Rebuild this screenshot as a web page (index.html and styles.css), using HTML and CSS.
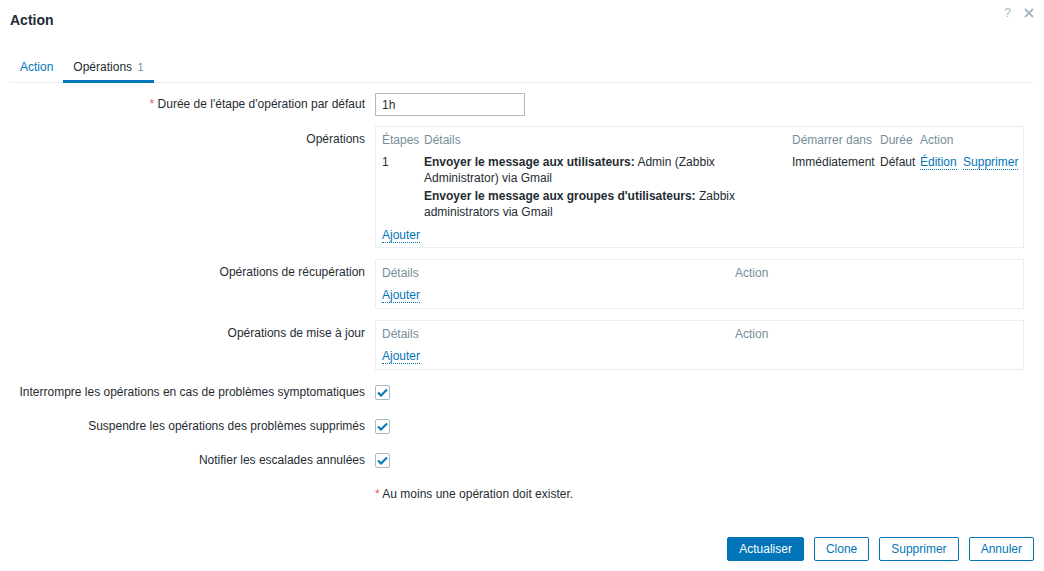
FILE: index.html
```html
<!DOCTYPE html>
<html lang="fr">
<head>
  <meta charset="UTF-8">
  <title>Action</title>
  <link rel="stylesheet" href="styles.css">
</head>
<body>
  <div class="dialog">
    <div class="dialog-head">
      <h4>Action</h4>
      <div class="head-btns">
        <span class="help">?</span>
        <svg class="close" width="10" height="10" viewBox="0 0 10 10"><path d="M1 1L9 9M9 1L1 9" stroke="#a3b6c2" stroke-width="1.8"/></svg>
      </div>
    </div>

    <ul class="tabs">
      <li><a>Action</a></li>
      <li class="active"><a>Opérations <span class="count">1</span></a></li>
    </ul>

    <div class="form">
      <div class="form-row row-input">
        <label class="lbl"><span class="req">*</span> Durée de l'étape d'opération par défaut</label>
        <div class="field"><input type="text" class="txt" value="1h"></div>
      </div>

      <div class="form-row">
        <label class="lbl lbl-box">Opérations</label>
        <div class="field">
          <div class="op-box">
            <div class="op-grid op-main">
              <div class="th">Étapes</div>
              <div class="th">Détails</div>
              <div class="th">Démarrer dans</div>
              <div class="th">Durée</div>
              <div class="th">Action</div>

              <div class="td">1</div>
              <div class="td details">
                <div><b>Envoyer le message aux utilisateurs:</b> Admin (Zabbix Administrator) via Gmail</div>
                <div><b>Envoyer le message aux groupes d'utilisateurs:</b> Zabbix administrators via Gmail</div>
              </div>
              <div class="td">Immédiatement</div>
              <div class="td">Défaut</div>
              <div class="td links"><a class="link">Édition</a> <a class="link">Supprimer</a></div>
            </div>
            <div class="add add-main"><a class="link">Ajouter</a></div>
          </div>
        </div>
      </div>

      <div class="form-row">
        <label class="lbl lbl-box">Opérations de récupération</label>
        <div class="field">
          <div class="op-box">
            <div class="op-grid op-small">
              <div class="th">Détails</div>
              <div class="th">Action</div>
            </div>
            <div class="add"><a class="link">Ajouter</a></div>
          </div>
        </div>
      </div>

      <div class="form-row">
        <label class="lbl lbl-box">Opérations de mise à jour</label>
        <div class="field">
          <div class="op-box">
            <div class="op-grid op-small">
              <div class="th">Détails</div>
              <div class="th">Action</div>
            </div>
            <div class="add"><a class="link">Ajouter</a></div>
          </div>
        </div>
      </div>

      <div class="form-row row-check">
        <label class="lbl">Interrompre les opérations en cas de problèmes symptomatiques</label>
        <div class="field"><span class="checkbox"><svg width="11" height="9" viewBox="0 0 11 9"><path d="M1 4.5L4 7.5L10 1.5" fill="none" stroke="#0275b8" stroke-width="2"/></svg></span></div>
      </div>
      <div class="form-row row-check">
        <label class="lbl">Suspendre les opérations des problèmes supprimés</label>
        <div class="field"><span class="checkbox"><svg width="11" height="9" viewBox="0 0 11 9"><path d="M1 4.5L4 7.5L10 1.5" fill="none" stroke="#0275b8" stroke-width="2"/></svg></span></div>
      </div>
      <div class="form-row row-check">
        <label class="lbl">Notifier les escalades annulées</label>
        <div class="field"><span class="checkbox"><svg width="11" height="9" viewBox="0 0 11 9"><path d="M1 4.5L4 7.5L10 1.5" fill="none" stroke="#0275b8" stroke-width="2"/></svg></span></div>
      </div>

      <div class="form-row row-note">
        <div class="lbl"></div>
        <div class="field"><span class="req">*</span> Au moins une opération doit exister.</div>
      </div>
    </div>

    <div class="footer">
      <button class="btn primary">Actualiser</button>
      <button class="btn alt">Clone</button>
      <button class="btn alt">Supprimer</button>
      <button class="btn alt">Annuler</button>
    </div>
  </div>
</body>
</html>
```

FILE: styles.css
```css
body {
  margin: 0;
  background: #fff;
  color: #1f2c33;
  font-family: "Liberation Sans", Arial, sans-serif;
  font-size: 12px;
}

.dialog {
  padding: 0 10px;
}

.dialog-head {
  display: flex;
  justify-content: space-between;
  height: 51px;
}

.dialog-head h4 {
  margin: 0;
  padding-top: 12px;
  font-size: 14px;
  line-height: 16px;
  font-weight: bold;
}

.head-btns {
  display: flex;
  align-items: center;
  height: 26px;
  gap: 13px;
}

.help {
  color: #a3b6c2;
  font-size: 12px;
}

.tabs {
  list-style: none;
  margin: 0;
  padding: 0;
  display: flex;
  border-bottom: 1px solid #ebeef0;
}

.tabs li a {
  display: block;
  padding: 8px 10px 5px;
  line-height: 16px;
  color: #0275b8;
  border-bottom: 3px solid transparent;
  margin-bottom: -1px;
}

.tabs li.active a {
  color: #1f2c33;
  border-bottom-color: #0275b8;
}

.count {
  color: #768d99;
  font-size: 11px;
  margin-left: 2px;
}

.form {
  padding-top: 10px;
}

.form-row {
  display: flex;
  margin-bottom: 11px;
}

.lbl {
  flex: none;
  width: 365px;
  text-align: right;
  padding-right: 10px;
  box-sizing: border-box;
  line-height: 16px;
}

.row-input .lbl {
  padding-top: 3px;
}

.lbl-box {
  padding-top: 5px;
}

.req {
  color: #e45959;
}

.field {
  flex: 1;
}

.txt {
  width: 150px;
  height: 23px;
  box-sizing: border-box;
  border: 1px solid #acbbc2;
  padding: 0 6px;
  font-family: inherit;
  font-size: 12px;
  color: #1f2c33;
  margin: 0;
  display: block;
}

.row-input {
  margin-bottom: 10px;
}

.op-box {
  width: 649px;
  box-sizing: border-box;
  border: 1px solid #ebeef0;
  padding: 5px 6px;
  line-height: 16px;
}

.op-grid {
  display: grid;
}

.op-main {
  grid-template-columns: 42px 368px 88px 40px auto;
}

.op-small {
  grid-template-columns: 353px auto;
}

.th {
  color: #768d99;
}

.td {
  padding-top: 6px;
  white-space: nowrap;
}

.td.details {
  white-space: normal;
  padding-right: 4px;
}

.details div + div {
  margin-top: 2px;
}

.add {
  padding-top: 6px;
}

.add-main {
  padding-top: 7px;
  margin-bottom: -1px;
}

.link {
  color: #0275b8;
  border-bottom: 1px dotted #0275b8;
  cursor: pointer;
}

.links .link + .link {
  margin-left: 3px;
}

.row-check {
  height: 22px;
  align-items: center;
  margin-bottom: 12px;
}

.checkbox {
  display: flex;
  align-items: center;
  justify-content: center;
  width: 15px;
  height: 15px;
  box-sizing: border-box;
  border: 1px solid #acbbc2;
  border-radius: 2px;
}

.row-note {
  align-items: center;
  height: 22px;
}

.footer {
  display: flex;
  justify-content: flex-end;
  gap: 10px;
  margin-top: 32px;
}

.btn {
  height: 24px;
  padding: 0 11px;
  font-family: inherit;
  font-size: 12px;
  border: 1px solid #0275b8;
  border-radius: 2px;
  background: #fff;
  color: #0275b8;
  cursor: pointer;
}

.btn.primary {
  background: #0275b8;
  color: #fff;
}
```
